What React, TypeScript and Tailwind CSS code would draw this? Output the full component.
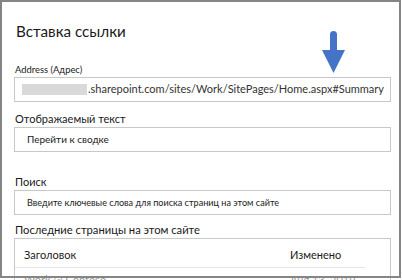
import React from "react";

const font = { fontFamily: 'Lato, Roboto, "Noto Sans", sans-serif' };

export default function App() {
  return (
    <div className="w-[402px] h-[280px] bg-white relative overflow-hidden" style={font}>
      <div className="w-[401px] h-[278px] border-2 border-[#858585] bg-white pl-[12px] pr-[8px] flex flex-col">
        <div className="shrink-0 h-[22px] mt-[18px] text-[15.2px] leading-[22px] text-[#1a1a1a] pl-[2px]">Вставка ссылки</div>
        <div className="shrink-0 mt-[21px] h-[14px] text-[9.4px] leading-[14px] text-[#1a1a1a] pl-[1px]">Address (Адрес)</div>
        <div className="shrink-0 h-[25px] border border-[#c8c8c8] flex items-center pl-[7px] text-[11px] text-[#333]">
          <span className="inline-block w-[65px] h-[11px] bg-[#d9d9d9] mr-[1px]" />
          <span>.sharepoint.com/sites/Work/SitePages/Home.aspx#Summary</span>
        </div>
        <div className="shrink-0 mt-[9px] h-[16px] text-[11px] leading-[16px] text-[#1a1a1a] pl-[1px]">Отображаемый текст</div>
        <div className="shrink-0 h-[25px] border border-[#c8c8c8] flex items-center pl-[12px] text-[10px] text-[#1a1a1a]">Перейти к сводке</div>
        <div className="shrink-0 mt-[22px] h-[16px] text-[11px] leading-[16px] text-[#1a1a1a] pl-[1px]">Поиск</div>
        <div className="shrink-0 h-[25px] border border-[#c8c8c8] flex items-center pl-[12px] text-[9.1px] text-[#1a1a1a]">Введите ключевые слова для поиска страниц на этом сайте</div>
        <div className="shrink-0 mt-[7px] h-[16px] text-[11.2px] leading-[16px] text-[#1a1a1a] pl-[1px]">Последние страницы на этом сайте</div>
        <div className="shrink-0 h-[60px] border border-[#c8c8c8]">
          <div className="h-[29px] mr-[25px] flex items-center border-b border-[#e6e6e6] text-[11px] text-[#1a1a1a]">
            <span className="pt-[4px] pl-[9px] flex-1">Заголовок</span>
            <span className="pt-[4px] w-[75px]">Изменено</span>
          </div>
          <div className="mr-[25px] flex text-[11px] leading-[13px] text-[#999] pt-[5px]">
            <span className="pl-[9px] flex-1">Work @ Contoso</span>
            <span className="w-[75px]">Aug 13, 2019</span>
          </div>
        </div>
      </div>
      <div className="absolute left-0 top-[276px] w-[401px] h-[2px] bg-[#858585]" />
      <svg className="absolute left-[320px] top-[29px]" width="28" height="46" viewBox="0 0 28 46">
        <path d="M13.5 2 Q17 2 17 5.5 L17 21 L25 21 L13.5 44 L2 21 L10 21 L10 5.5 Q10 2 13.5 2 Z" fill="#4573c5" />
      </svg>
    </div>
  );
}
